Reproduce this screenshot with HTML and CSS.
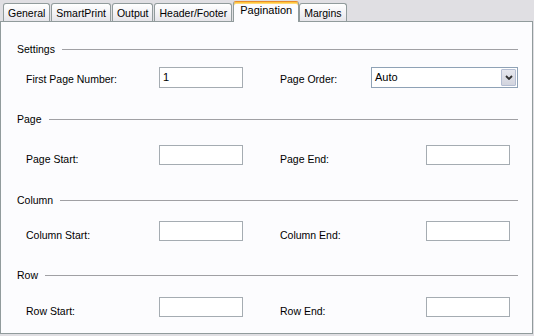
FILE: index.html
```html
<!DOCTYPE html>
<html>
<head>
<meta charset="utf-8">
<link rel="stylesheet" href="styles.css">
</head>
<body>
<div class="window">
  <div class="tabs">
    <div class="tab">General</div>
    <div class="tab">SmartPrint</div>
    <div class="tab">Output</div>
    <div class="tab">Header/Footer</div>
    <div class="tab active">Pagination</div>
    <div class="tab">Margins</div>
  </div>
  <div class="panel">
    <section class="sec sec-settings">
      <div class="hdr"><span>Settings</span><i class="rule"></i></div>
      <div class="row row-first">
        <span class="lbl1">First Page Number:</span>
        <div class="field">1</div>
        <span class="lbl2 lbl2-short">Page Order:</span>
        <div class="select">
          <span class="select-text">Auto</span>
          <span class="select-btn">
            <svg width="8" height="5" viewBox="0 0 8 5"><path d="M1 1 L4 4 L7 1" fill="none" stroke="#303030" stroke-width="1.8"/></svg>
          </span>
        </div>
      </div>
    </section>
    <section class="sec sec-page">
      <div class="hdr"><span>Page</span><i class="rule"></i></div>
      <div class="row">
        <span class="lbl1">Page Start:</span>
        <div class="field"></div>
        <span class="lbl2">Page End:</span>
        <div class="field"></div>
      </div>
    </section>
    <section class="sec sec-column">
      <div class="hdr"><span>Column</span><i class="rule"></i></div>
      <div class="row">
        <span class="lbl1">Column Start:</span>
        <div class="field"></div>
        <span class="lbl2">Column End:</span>
        <div class="field"></div>
      </div>
    </section>
    <section class="sec sec-row">
      <div class="hdr"><span>Row</span><i class="rule"></i></div>
      <div class="row">
        <span class="lbl1">Row Start:</span>
        <div class="field"></div>
        <span class="lbl2">Row End:</span>
        <div class="field"></div>
      </div>
    </section>
  </div>
</div>
</body>
</html>
```

FILE: styles.css
```css
html, body {
  margin: 0;
  padding: 0;
  background: #e0dfe3;
}
body {
  font-family: "Liberation Sans", Arial, sans-serif;
  font-size: 10.5px;
  color: #000;
}
.window {
  width: 534px;
  height: 336px;
}
.tabs {
  display: flex;
  align-items: flex-end;
  height: 21px;
  padding-left: 3px;
  position: relative;
  z-index: 1;
}
.tab {
  box-sizing: border-box;
  height: 18px;
  line-height: 18px;
  padding: 0 4px;
  margin-right: 1px;
  border: 1px solid #919b9c;
  border-bottom: none;
  border-radius: 3px 3px 0 0;
  background: linear-gradient(#ffffff, #f1f0f4 60%, #e6e5ea);
  white-space: nowrap;
}
.tab.active {
  height: 21px;
  margin-bottom: -1px;
  margin-right: 0;
  padding: 0 6px;
  line-height: 17px;
  font-size: 11px;
  background: #fcfcfe;
  border-top: 1px solid #e68b2c;
  box-shadow: inset 0 1px 0 #ffc83c, inset 0 2px 0 #ffd878;
}
.panel {
  box-sizing: border-box;
  width: 533px;
  height: 313px;
  border: 1px solid #919b9c;
  background: #fcfcfe;
  padding: 21px 14px 0 16px;
}
.hdr {
  display: flex;
  align-items: center;
  height: 13px;
  line-height: 13px;
}
.rule {
  flex: 1;
  height: 1px;
  background: #a0a0a4;
  margin-left: 7px;
}
.row {
  display: flex;
  align-items: center;
  padding-left: 9px;
}
.lbl1 {
  width: 133px;
  padding-top: 9px;
}
.lbl2 {
  width: 146px;
  margin-left: 37px;
  padding-top: 9px;
}
.row-first .lbl1,
.row-first .lbl2 {
  padding-top: 2px;
}
.lbl2-short {
  width: 91px;
}
.field {
  box-sizing: border-box;
  width: 84px;
  height: 20px;
  border: 1px solid #a5acb2;
  background: #fff;
  padding-left: 3px;
  line-height: 18px;
  font-size: 11px;
}
.row-first .field {
  height: 21px;
  line-height: 19px;
}
.select {
  box-sizing: border-box;
  width: 147px;
  height: 21px;
  border: 1px solid #8fa2b6;
  background: #fff;
  display: flex;
  align-items: stretch;
  padding: 1px;
}
.select-text {
  flex: 1;
  padding-left: 2px;
  line-height: 17px;
  font-size: 11px;
}
.select-btn {
  box-sizing: border-box;
  width: 15px;
  display: flex;
  align-items: center;
  justify-content: center;
  border: 1px solid #b4bdd2;
  border-radius: 1px;
  background: linear-gradient(#e6e7ee, #d2d4de);
}
.sec-settings .hdr { margin-bottom: 11px; }
.sec-page { margin-top: 25px; }
.sec-page .hdr { margin-bottom: 18px; }
.sec-column { margin-top: 29px; }
.sec-column .hdr { margin-bottom: 13px; }
.sec-row { margin-top: 28px; }
.sec-row .hdr { margin-bottom: 14px; }
```
